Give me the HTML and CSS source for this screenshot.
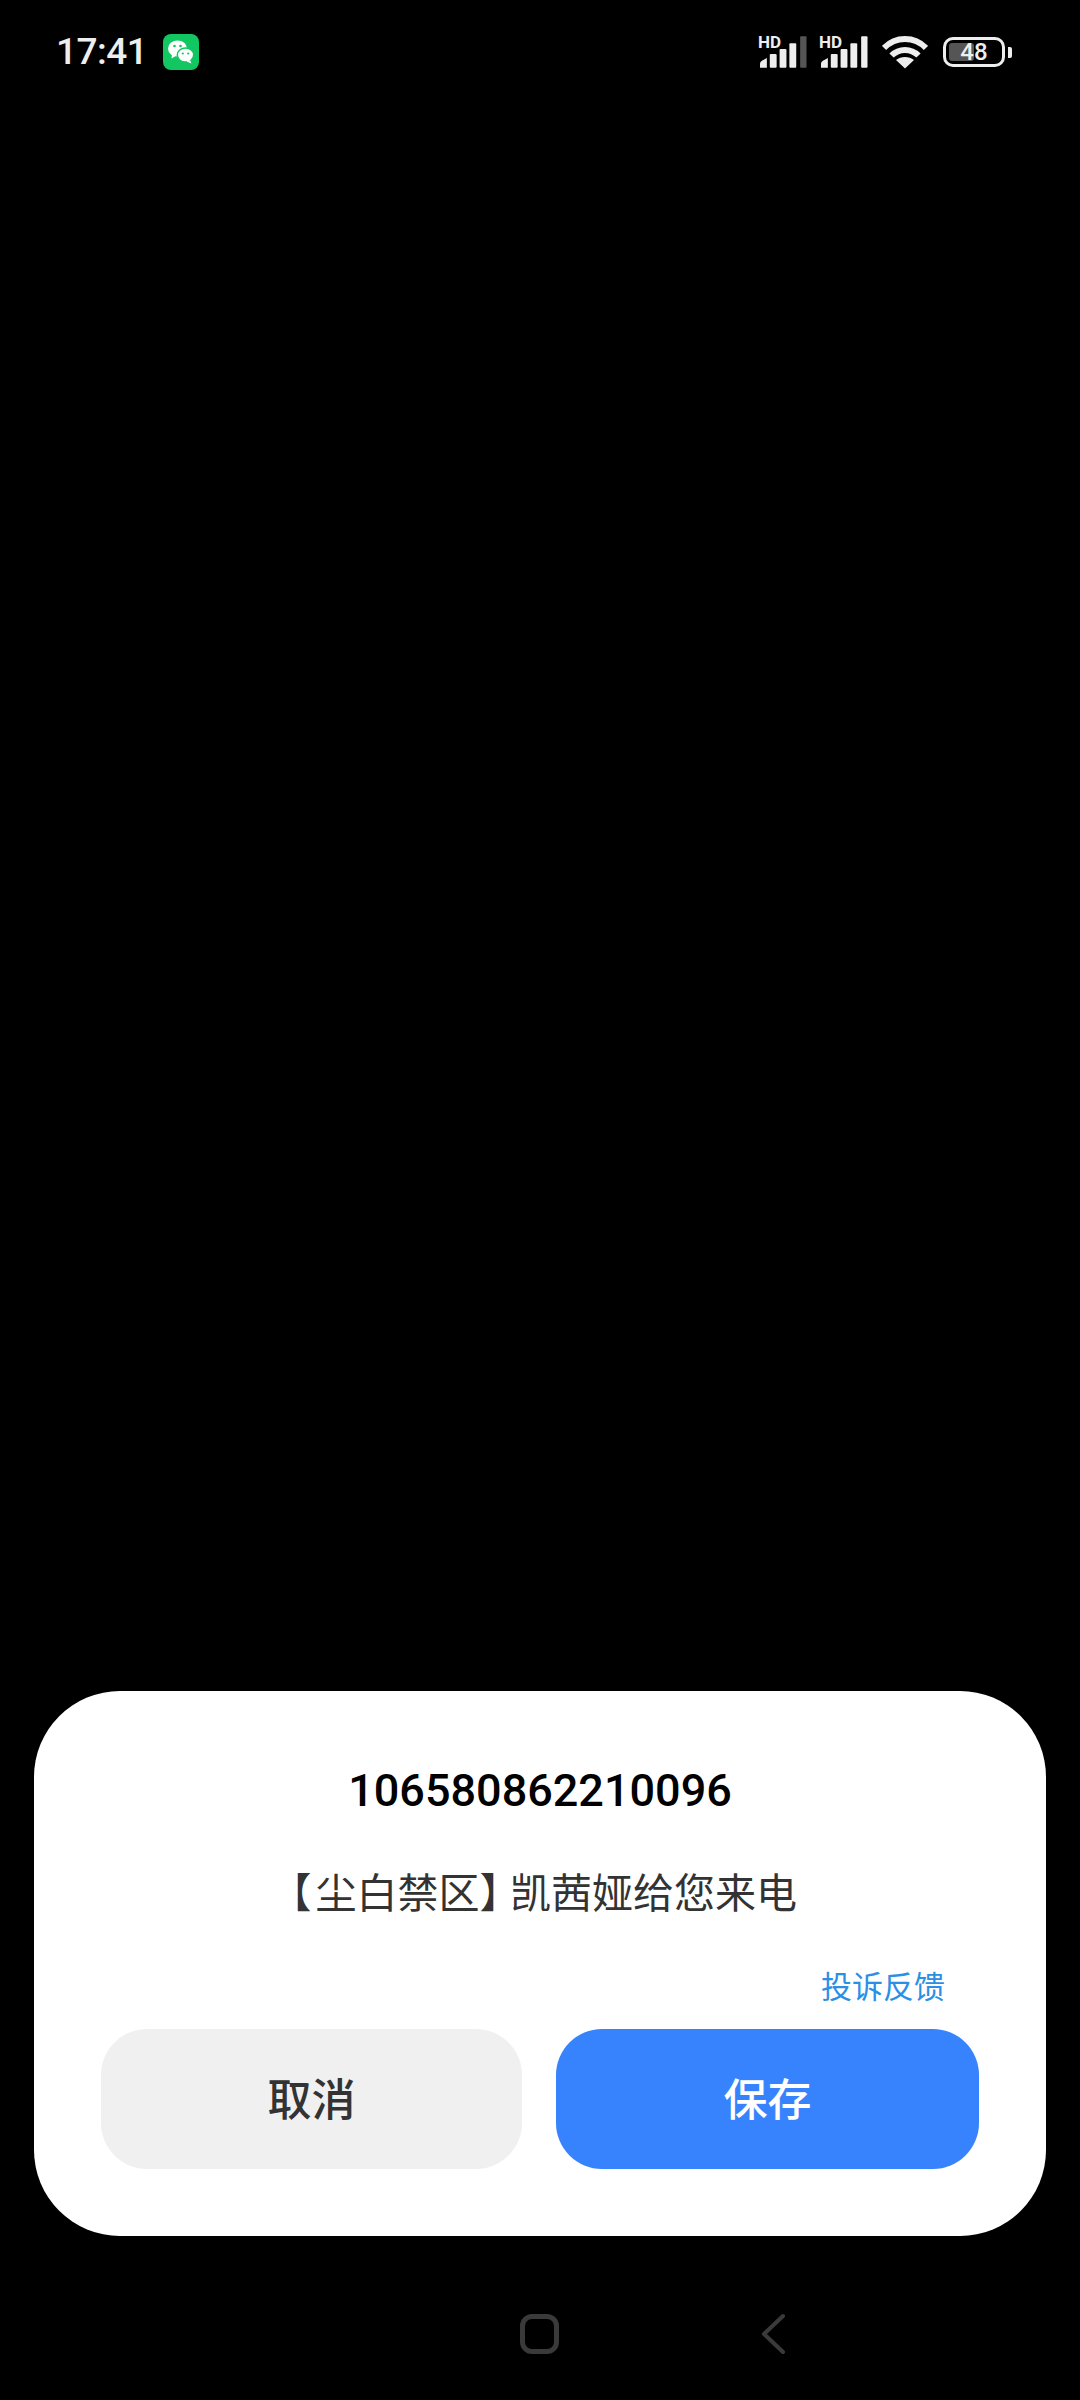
FILE: index.html
```html
<!DOCTYPE html>
<html>
<head>
    <meta charset="UTF-8">
    <title>来电号码</title>
    <link rel="stylesheet" href="styles.css">
</head>
<body>
<div class="screen">
    <div class="status">
        <span class="time">17:41</span>
        <span class="wechat">
            <svg width="36" height="36" viewBox="0 0 36 36">
                <rect width="36" height="36" rx="8" fill="#12c762"/>
                <ellipse cx="14.5" cy="14.5" rx="9.5" ry="8" fill="#fff"/>
                <path d="M9 20l-.5 4.5 5-3z" fill="#fff"/>
                <ellipse cx="22.5" cy="21" rx="8.2" ry="7" fill="#fff" stroke="#12c762" stroke-width="1.5"/>
                <path d="M27 26l1.5 3.5-5-2z" fill="#fff"/>
                <circle cx="11.5" cy="12" r="1.3" fill="#12c762"/>
                <circle cx="17.5" cy="12" r="1.3" fill="#12c762"/>
                <circle cx="19.8" cy="19.5" r="1.1" fill="#12c762"/>
                <circle cx="25.2" cy="19.5" r="1.1" fill="#12c762"/>
            </svg>
        </span>
        <div class="status-right">
            <div class="signal">
                <span class="hd">HD</span>
                <svg width="47" height="32" viewBox="0 0 48 32">
                    <path d="M0 32v-4q0-2 2-3l5-3v10z" fill="#eee"/>
                    <rect x="10" y="18" width="7" height="14" rx="1" fill="#eee"/>
                    <rect x="20" y="13" width="7" height="19" rx="1" fill="#eee"/>
                    <rect x="30" y="7" width="7" height="25" rx="1" fill="#eee"/>
                    <rect x="41" y="0" width="6.500" height="32" rx="1" fill="#555"/>
                </svg>
            </div>
            <div class="signal">
                <span class="hd">HD</span>
                <svg width="47" height="32" viewBox="0 0 48 32">
                    <path d="M0 32v-4q0-2 2-3l5-3v10z" fill="#eee"/>
                    <rect x="10" y="18" width="7" height="14" rx="1" fill="#eee"/>
                    <rect x="20" y="13" width="7" height="19" rx="1" fill="#eee"/>
                    <rect x="30" y="7" width="7" height="25" rx="1" fill="#eee"/>
                    <rect x="41" y="0" width="6.500" height="32" rx="1" fill="#eee"/>
                </svg>
            </div>
            <svg class="wifi" width="46" height="34" viewBox="0 0 46 34" fill="none" stroke="#eee" stroke-width="6">
                <path d="M2 13C13.500 1 32.500 1 44 13"/>
                <path d="M9.500 20.500C17 13 29 13 36.500 20.500"/>
                <path d="M23 33.500l-9-8.500c5-4 13-4 18 0z" fill="#eee" stroke="none"/>
            </svg>
            <div class="battery">
                <div class="battery-body">
                    <span class="battery-fill"></span>
                    <span class="battery-num">48</span>
                </div>
                <span class="battery-nub"></span>
            </div>
        </div>
    </div>

    <div class="dialog">
        <div class="number">106580862210096</div>
        <div class="message"><span class="bracketLeft">【</span>尘白禁区<span class="bracketRight">】</span>凯茜娅给您来电</div>
        <div class="report"><a href="javascript:;">投诉反馈</a></div>
        <div class="btns">
            <a href="javascript:;" class="btn btnCancel">取消</a>
            <a href="javascript:;" class="btn btnSave">保存</a>
        </div>
    </div>

    <div class="navbar">
        <span class="nav-home"></span>
        <svg class="nav-back" width="26" height="42" viewBox="0 0 26 42" fill="none" stroke="#3a3a3a" stroke-width="4" stroke-linecap="round" stroke-linejoin="round">
            <path d="M23 3L4 21l19 18"/>
        </svg>
    </div>
</div>
</body>
</html>
```

FILE: styles.css
```css
body, div, span, a {
    margin: 0;
    padding: 0;
}

body {
    background: #000;
    font-family: Roboto, "Noto Sans CJK SC", sans-serif;
}

a {
    display: block;
    text-decoration: none;
}

.screen {
    display: flex;
    flex-direction: column;
    width: 1080px;
    height: 2400px;
    overflow: hidden;
}

/*状态栏*/
.status {
    display: flex;
    align-items: center;
    padding: 34px 68px 0 56px;
    height: 36px;
}

.time {
    width: 107px;
    font-size: 37px;
    line-height: 36px;
    letter-spacing: -0.5px;
    font-weight: 500;
    color: #eee;
}

.wechat {
    display: flex;
    width: 36px;
    height: 36px;
}

.status-right {
    display: flex;
    align-items: center;
    margin-left: auto;
}

.signal {
    position: relative;
    width: 47px;
    height: 32px;
    margin-right: 14px;
}

.hd {
    position: absolute;
    top: 0;
    left: -2px;
    font-size: 17px;
    line-height: 13px;
    font-weight: 700;
    color: #eee;
}

.wifi {
    margin-right: 15px;
}

.battery {
    display: flex;
    align-items: center;
}

.battery-body {
    display: flex;
    align-items: center;
    justify-content: center;
    position: relative;
    box-sizing: border-box;
    width: 62px;
    height: 30px;
    border: 3.5px solid #eee;
    border-radius: 10px;
}

.battery-fill {
    position: absolute;
    top: 3px;
    bottom: 3px;
    left: 3px;
    width: 25px;
    background: #555;
    border-radius: 3px;
}

.battery-num {
    position: relative;
    font-size: 24px;
    line-height: 24px;
    font-weight: 500;
    color: #eee;
}

.battery-nub {
    width: 4px;
    height: 11px;
    margin-left: 3px;
    background: #eee;
    border-radius: 0 2px 2px 0;
}

/*弹窗*/
.dialog {
    box-sizing: border-box;
    height: 545px;
    margin: auto 34px 0;
    padding: 73px 67px 0;
    background: #fff;
    border-radius: 86px;
}

.number {
    font-size: 45px;
    line-height: 54px;
    font-weight: 500;
    text-align: center;
    color: #000;
}

.message {
    margin-top: 48px;
    padding-left: 8px;
    font-size: 41px;
    line-height: 56px;
    text-align: center;
    color: #333;
}

/*括号用半宽字形,间距手动补*/
.bracketLeft {
    margin-right: 4px;
    font-feature-settings: "halt";
}

.bracketRight {
    margin-right: 10px;
    font-feature-settings: "halt";
}

.report {
    display: flex;
    justify-content: flex-end;
    margin-top: 44px;
    padding-right: 34px;
}

.report a {
    font-size: 31px;
    line-height: 44px;
    color: #2b8fe6;
}

.btns {
    display: flex;
    gap: 34px;
    margin-top: 19px;
}

.btn {
    height: 140px;
    font-size: 44px;
    line-height: 144px;
    font-weight: 500;
    text-align: center;
    border-radius: 46px;
}

.btnCancel {
    width: 421px;
    background: #f0f0f0;
    color: #333;
}

.btnSave {
    flex: 1;
    background: #3783fd;
    color: #fff;
}

/*底部导航*/
.navbar {
    display: flex;
    align-items: center;
    height: 164px;
    padding: 32px 0 0 520px;
    box-sizing: border-box;
}

.nav-home {
    box-sizing: border-box;
    width: 39px;
    height: 40px;
    border: 5px solid #3a3a3a;
    border-radius: 12px;
}

.nav-back {
    margin-left: 201px;
}
```
